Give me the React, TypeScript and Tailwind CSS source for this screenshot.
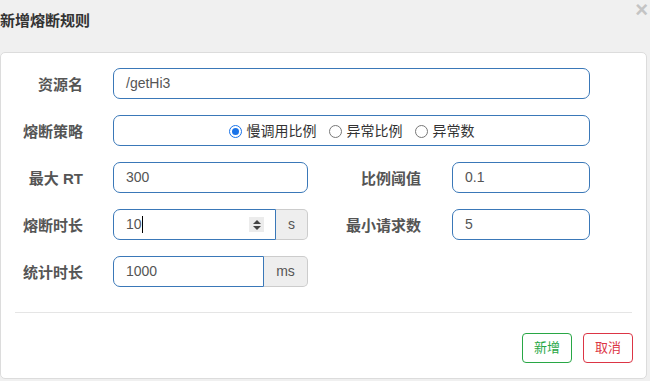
import React from "react";

const font = { fontFamily: '"Liberation Sans", "Noto Sans CJK SC", sans-serif' };

function Radio({ checked, label }: { checked?: boolean; label: string }) {
  return (
    <span className="flex items-center gap-[5px]">
      <span
        className={
          checked
            ? "w-[13px] h-[13px] rounded-full border-[1.5px] border-[#1a73e8] flex items-center justify-center"
            : "w-[13px] h-[13px] rounded-full border border-[#777]"
        }
      >
        {checked && <span className="w-[7px] h-[7px] rounded-full bg-[#1a73e8]" />}
      </span>
      <span className="text-[14px] text-[#333]">{label}</span>
    </span>
  );
}

function Label({ children, w = "w-[82px]" }: { children: React.ReactNode; w?: string }) {
  return (
    <div className={`${w} shrink-0 text-right text-[15px] font-bold text-[#555] pt-[3px]`}>{children}</div>
  );
}

export default function App() {
  return (
    <div className="w-[650px] h-[381px] bg-[#f0f0f0] overflow-hidden relative" style={font}>
      {/* header */}
      <div className="h-[52px] flex items-start pt-[11px]">
        <h4 className="text-[15px] font-bold text-[#333] leading-[20px]">新增熔断规则</h4>
      </div>
      <span className="absolute right-[2px] top-[1px] text-[22px] font-bold text-[#c4c4c4] leading-[18px]">×</span>

      {/* card */}
      <div className="mr-[3px] h-[327px] bg-white border border-[#dcdcdc] rounded-[5px] flex flex-col">
        <div className="flex flex-col gap-[16px] pt-[15px]">
          {/* row 1 */}
          <div className="flex items-center">
            <Label>资源名</Label>
            <div className="ml-[30px] w-[477px] h-[31px] border border-[#3a78b8] rounded-[7px] flex items-center pl-[12px] text-[14px] text-[#555]">
              /getHi3
            </div>
          </div>
          {/* row 2 */}
          <div className="flex items-center">
            <Label>熔断策略</Label>
            <div className="ml-[30px] w-[477px] h-[31px] border border-[#3a78b8] rounded-[7px] flex items-center justify-center gap-[12px] pt-[2px]">
              <Radio checked label="慢调用比例" />
              <Radio label="异常比例" />
              <Radio label="异常数" />
            </div>
          </div>
          {/* row 3 */}
          <div className="flex items-center">
            <Label>最大 RT</Label>
            <div className="ml-[30px] w-[195px] h-[31px] border border-[#3a78b8] rounded-[7px] flex items-center pl-[12px] text-[14px] text-[#555]">
              300
            </div>
            <Label w="w-[113px]">比例阈值</Label>
            <div className="ml-[31px] w-[138px] h-[31px] border border-[#3a78b8] rounded-[7px] flex items-center pl-[12px] text-[14px] text-[#555]">
              0.1
            </div>
          </div>
          {/* row 4 */}
          <div className="flex items-center">
            <Label>熔断时长</Label>
            <div className="ml-[30px] w-[195px] h-[31px] flex">
              <div className="flex-1 border border-[#3a78b8] rounded-l-[7px] flex items-center pl-[12px] pr-[11px] text-[14px] text-[#555]">
                <span>10</span>
                <span className="w-px h-[17px] bg-black" />
                <span className="ml-auto w-[15px] h-[15px] bg-[#ececec] flex flex-col items-center justify-center gap-[2px]">
                  <span className="w-0 h-0 border-l-[4px] border-r-[4px] border-b-[4px] border-l-transparent border-r-transparent border-b-[#444]" />
                  <span className="w-0 h-0 border-l-[4px] border-r-[4px] border-t-[4px] border-l-transparent border-r-transparent border-t-[#444]" />
                </span>
              </div>
              <div className="w-[32px] bg-[#eeeeee] border border-l-0 border-[#cccccc] rounded-r-[5px] flex items-center justify-center text-[14px] text-[#555]">
                s
              </div>
            </div>
            <Label w="w-[113px]">最小请求数</Label>
            <div className="ml-[31px] w-[138px] h-[31px] border border-[#3a78b8] rounded-[7px] flex items-center pl-[12px] text-[14px] text-[#555]">
              5
            </div>
          </div>
          {/* row 5 */}
          <div className="flex items-center">
            <Label>统计时长</Label>
            <div className="ml-[30px] w-[195px] h-[31px] flex">
              <div className="flex-1 border border-[#3a78b8] rounded-l-[7px] flex items-center pl-[12px] text-[14px] text-[#555]">
                1000
              </div>
              <div className="w-[44px] bg-[#eeeeee] border border-l-0 border-[#cccccc] rounded-r-[5px] flex items-center justify-center text-[14px] text-[#555]">
                ms
              </div>
            </div>
          </div>
        </div>

        {/* footer */}
        <div className="mx-[14px] mt-[25px] border-t border-[#e5e5e5]" />
        <div className="flex justify-end gap-[11px] pr-[13px] pt-[20px]">
          <button className="w-[50px] h-[30px] border border-[#28a745] rounded-[4px] text-[13px] text-[#28a745] bg-white">
            新增
          </button>
          <button className="w-[50px] h-[30px] border border-[#dc3545] rounded-[4px] text-[13px] text-[#dc3545] bg-white">
            取消
          </button>
        </div>
      </div>
    </div>
  );
}
